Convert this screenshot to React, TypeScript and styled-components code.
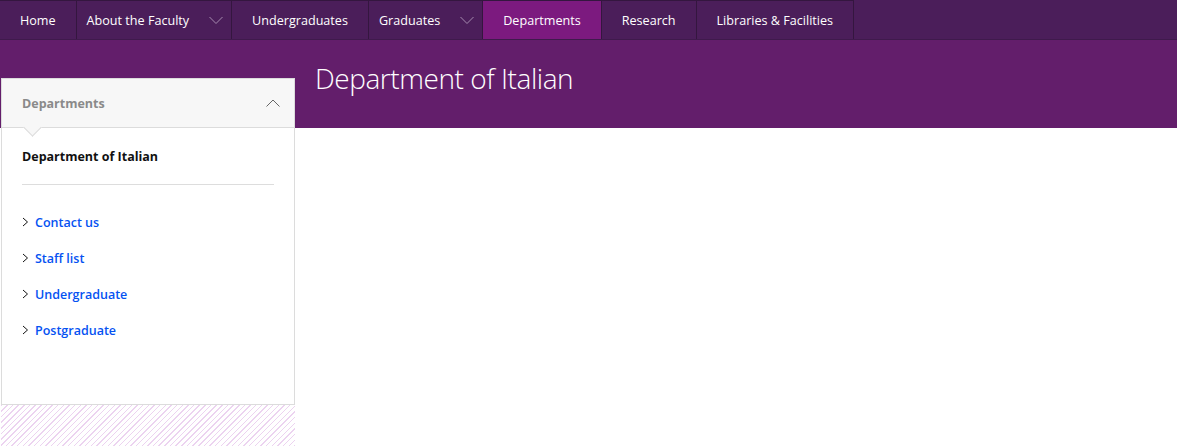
import React from "react";
import styled, { createGlobalStyle } from "styled-components";

const GlobalStyle = createGlobalStyle`
  html, body { margin: 0; padding: 0; background: #fff; }
  body { font-family: "Open Sans", "Liberation Sans", sans-serif; }
  * { box-sizing: border-box; }
`;

const Page = styled.div`
  width: 1177px;
  height: 446px;
  overflow: hidden;
  display: flex;
  flex-direction: column;
`;

const NavBar = styled.nav`
  height: 40px;
  flex-shrink: 0;
  display: flex;
  background: #4b1e5a;
  border-bottom: 1px solid #3f1a4c;
`;

const NavItem = styled.a<{ $active?: boolean; $dropdown?: boolean }>`
  display: flex;
  align-items: center;
  gap: 20px;
  height: 39px;
  padding: ${(p) => (p.$dropdown ? "0 8px 0 10px" : "0 20px")};
  border-top: 1px solid #34163f;
  border-right: 1px solid #34163f;
  background: ${(p) => (p.$active ? "#7c1a7f" : "transparent")};
  color: #fff;
  font-size: 12.6px;
  white-space: nowrap;
  text-decoration: none;
`;

const Hero = styled.header`
  height: 88px;
  flex-shrink: 0;
  background: #631e6b;
  padding: 20px 0 0 315px;
`;

const HeroTitle = styled.h1`
  margin: 0;
  color: #fff;
  font-weight: 300;
  font-size: 28px;
  line-height: 36px;
  letter-spacing: -0.45px;
`;

const Content = styled.main`
  display: flex;
  padding-left: 1px;
`;

const SideColumn = styled.aside`
  width: 294px;
  margin-top: -50px;
  display: flex;
  flex-direction: column;
`;

const SideBox = styled.div`
  border: 1px solid #dcdcdc;
  background: #fff;
  height: 327px;
`;

const SideHeader = styled.div`
  position: relative;
  height: 49px;
  background: #f7f7f7;
  border-bottom: 1px solid #dcdcdc;
  display: flex;
  align-items: center;
  justify-content: space-between;
  padding: 0 14px 0 20px;
  color: #8a8a8a;
  font-weight: 700;
  font-size: 12.5px;

  &::after {
    content: "";
    position: absolute;
    left: 24px;
    bottom: -7px;
    width: 12px;
    height: 12px;
    background: #f7f7f7;
    border-right: 1px solid #dcdcdc;
    border-bottom: 1px solid #dcdcdc;
    transform: rotate(45deg);
  }
`;

const SideBody = styled.div`
  padding: 20px 20px 0 20px;
`;

const CurrentTitle = styled.div`
  font-weight: 700;
  font-size: 12.5px;
  color: #111;
  line-height: 18px;
  padding-bottom: 18px;
  border-bottom: 1px solid #dddddd;
  margin-bottom: 20px;
`;

const LinkList = styled.ul`
  list-style: none;
  margin: 0;
  padding: 8px 0 0 0;
  display: flex;
  flex-direction: column;
  gap: 18px;
`;

const LinkItem = styled.li`
  display: flex;
  align-items: center;
  gap: 6px;
  height: 18px;
`;

const SideLink = styled.a`
  color: #0552f2;
  font-weight: 600;
  font-size: 12.5px;
  text-decoration: none;
`;

const Hatch = styled.div`
  height: 42px;
  background: repeating-linear-gradient(
    135deg,
    #ecd3f0 0px,
    #ecd3f0 1px,
    #ffffff 1px,
    #ffffff 4px
  );
`;

const Chevron = ({ dir }: { dir: "down" | "up" | "right" }) => {
  if (dir === "right")
    return (
      <svg width="7" height="10" viewBox="0 0 7 10">
        <path d="M1 1 L5.5 5 L1 9" fill="none" stroke="#111" strokeWidth="1" />
      </svg>
    );
  const d = dir === "down" ? "M0.5 1 L7 7.5 L13.5 1" : "M0.5 7.5 L7 1 L13.5 7.5";
  const color = dir === "down" ? "#a58aae" : "#666";
  return (
    <svg width="14" height="9" viewBox="0 0 14 9">
      <path d={d} fill="none" stroke={color} strokeWidth="1" />
    </svg>
  );
};

const navItems = [
  { label: "Home" },
  { label: "About the Faculty", dropdown: true },
  { label: "Undergraduates" },
  { label: "Graduates", dropdown: true },
  { label: "Departments", active: true },
  { label: "Research" },
  { label: "Libraries & Facilities" },
];

const links = ["Contact us", "Staff list", "Undergraduate", "Postgraduate"];

export default function App() {
  return (
    <>
      <GlobalStyle />
      <Page>
        <NavBar>
          {navItems.map((n) => (
            <NavItem key={n.label} href="#" $active={n.active} $dropdown={n.dropdown}>
              <span>{n.label}</span>
              {n.dropdown && <Chevron dir="down" />}
            </NavItem>
          ))}
        </NavBar>
        <Hero>
          <HeroTitle>Department of Italian</HeroTitle>
        </Hero>
        <Content>
          <SideColumn>
            <SideBox>
              <SideHeader>
                <span>Departments</span>
                <Chevron dir="up" />
              </SideHeader>
              <SideBody>
                <CurrentTitle>Department of Italian</CurrentTitle>
                <LinkList>
                  {links.map((l) => (
                    <LinkItem key={l}>
                      <Chevron dir="right" />
                      <SideLink href="#">{l}</SideLink>
                    </LinkItem>
                  ))}
                </LinkList>
              </SideBody>
            </SideBox>
            <Hatch />
          </SideColumn>
        </Content>
      </Page>
    </>
  );
}
